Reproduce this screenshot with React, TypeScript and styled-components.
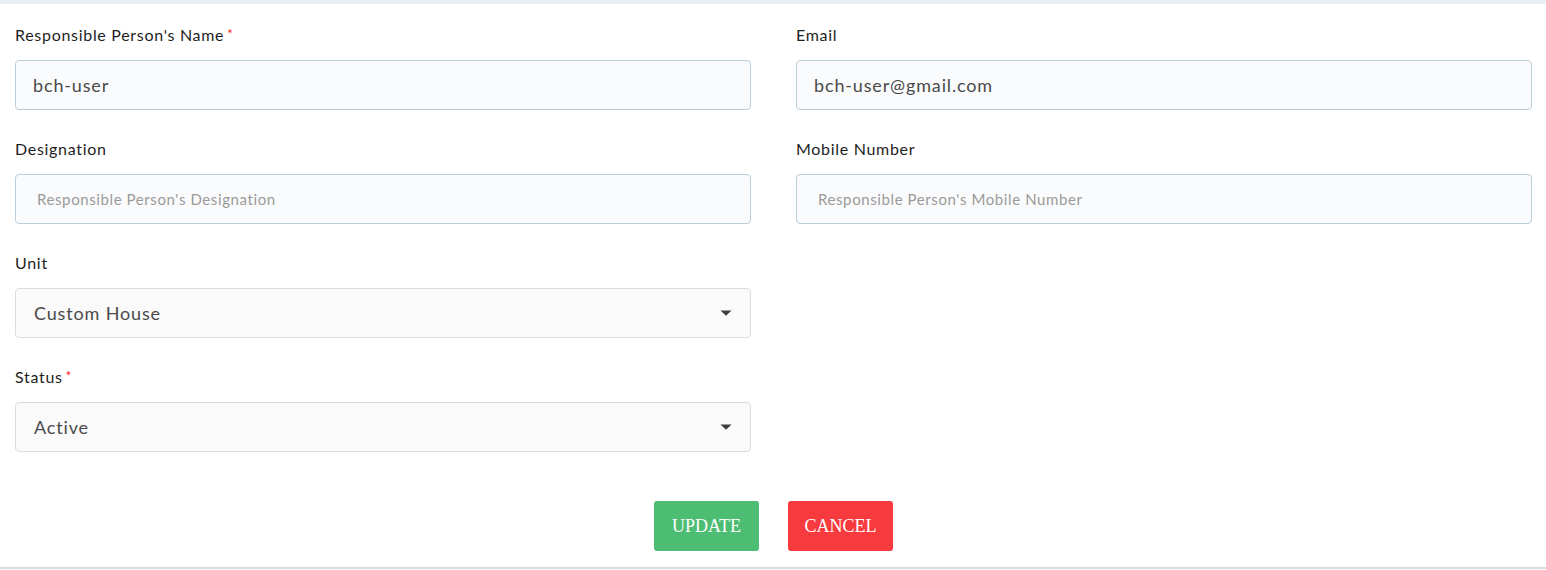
import React from "react";
import styled, { createGlobalStyle } from "styled-components";

const Global = createGlobalStyle`
  html, body { margin: 0; padding: 0; background: #ffffff; }
  body { font-family: Lato, "Open Sans", sans-serif; }
  * { box-sizing: border-box; }
`;

const TopStrip = styled.div`
  height: 4px;
  background: #e9eef3;
`;

const Card = styled.form`
  background: #ffffff;
  padding: 20px 14px 16px 15px;
  border-bottom: 2px solid #d6dce2;
`;

const Grid = styled.div`
  display: grid;
  grid-template-columns: 1fr 1fr;
  column-gap: 45px;
  row-gap: 28px;
`;

const Field = styled.div`
  display: flex;
  flex-direction: column;
`;

const Label = styled.label`
  display: block;
  height: 22px;
  line-height: 22px;
  font-size: 16px;
  letter-spacing: 0.7px;
  color: #1e1e1e;
  margin-bottom: 14px;
  white-space: nowrap;
`;

const Req = styled.span`
  color: #ff1a1a;
  font-size: 13px;
  line-height: 0;
  vertical-align: 2px;
  margin-left: 3px;
`;

const Input = styled.input<{ $placeholderShown?: boolean }>`
  height: 50px;
  width: 100%;
  border: 1px solid #bccdda;
  border-radius: 4px;
  background: #fafbfc;
  padding: 0 ${(p) => (p.$placeholderShown ? "21px" : "17px")};
  font-family: Lato, "Open Sans", sans-serif;
  font-size: ${(p) => (p.$placeholderShown ? "15px" : "18px")};
  letter-spacing: ${(p) => (p.$placeholderShown ? "0.6px" : "0.85px")};
  color: #4a4a4a;
  outline: none;
  &::placeholder {
    color: #9a9a9a;
  }
`;

const SelectWrap = styled.div`
  position: relative;
  width: 100%;
`;

const Select = styled.select`
  appearance: none;
  -webkit-appearance: none;
  height: 50px;
  width: 100%;
  border: 1px solid #dcdcdc;
  border-radius: 4px;
  background: #fafafa;
  padding: 0 40px 0 18px;
  font-family: Lato, "Open Sans", sans-serif;
  font-size: 18px;
  letter-spacing: 0.85px;
  color: #4a4a4a;
  outline: none;
`;

const Caret = styled.svg`
  position: absolute;
  right: 19px;
  top: 22px;
  pointer-events: none;
`;

const Actions = styled.div`
  display: flex;
  justify-content: center;
  gap: 29px;
  margin-top: 49px;
`;

const Button = styled.button<{ $variant: "update" | "cancel" }>`
  width: 105px;
  height: 50px;
  border: none;
  border-radius: 3px;
  background: ${(p) => (p.$variant === "update" ? "#4dbd74" : "#f63a3d")};
  color: #ffffff;
  font-family: "Liberation Serif", "Times New Roman", serif;
  font-size: 18px;
  text-transform: uppercase;
  cursor: pointer;
`;

const DropCaret = () => (
  <Caret width="12" height="6" viewBox="0 0 12 6">
    <path d="M0.5 0.5 L11.5 0.5 L6 5.8 Z" fill="#3d3d3d" />
  </Caret>
);

export default function App() {
  return (
    <>
      <Global />
      <TopStrip />
      <Card onSubmit={(e) => e.preventDefault()}>
        <Grid>
          <Field>
            <Label>
              Responsible Person's Name<Req>*</Req>
            </Label>
            <Input defaultValue="bch-user" />
          </Field>
          <Field>
            <Label>Email</Label>
            <Input defaultValue="bch-user@gmail.com" />
          </Field>
          <Field>
            <Label>Designation</Label>
            <Input $placeholderShown placeholder="Responsible Person's Designation" />
          </Field>
          <Field>
            <Label>Mobile Number</Label>
            <Input $placeholderShown placeholder="Responsible Person's Mobile Number" />
          </Field>
          <Field>
            <Label>Unit</Label>
            <SelectWrap>
              <Select defaultValue="custom">
                <option value="custom">Custom House</option>
              </Select>
              <DropCaret />
            </SelectWrap>
          </Field>
          <div />
          <Field>
            <Label>
              Status<Req>*</Req>
            </Label>
            <SelectWrap>
              <Select defaultValue="active">
                <option value="active">Active</option>
                <option value="inactive">Inactive</option>
              </Select>
              <DropCaret />
            </SelectWrap>
          </Field>
          <div />
        </Grid>
        <Actions>
          <Button type="submit" $variant="update">Update</Button>
          <Button type="button" $variant="cancel">Cancel</Button>
        </Actions>
      </Card>
    </>
  );
}
